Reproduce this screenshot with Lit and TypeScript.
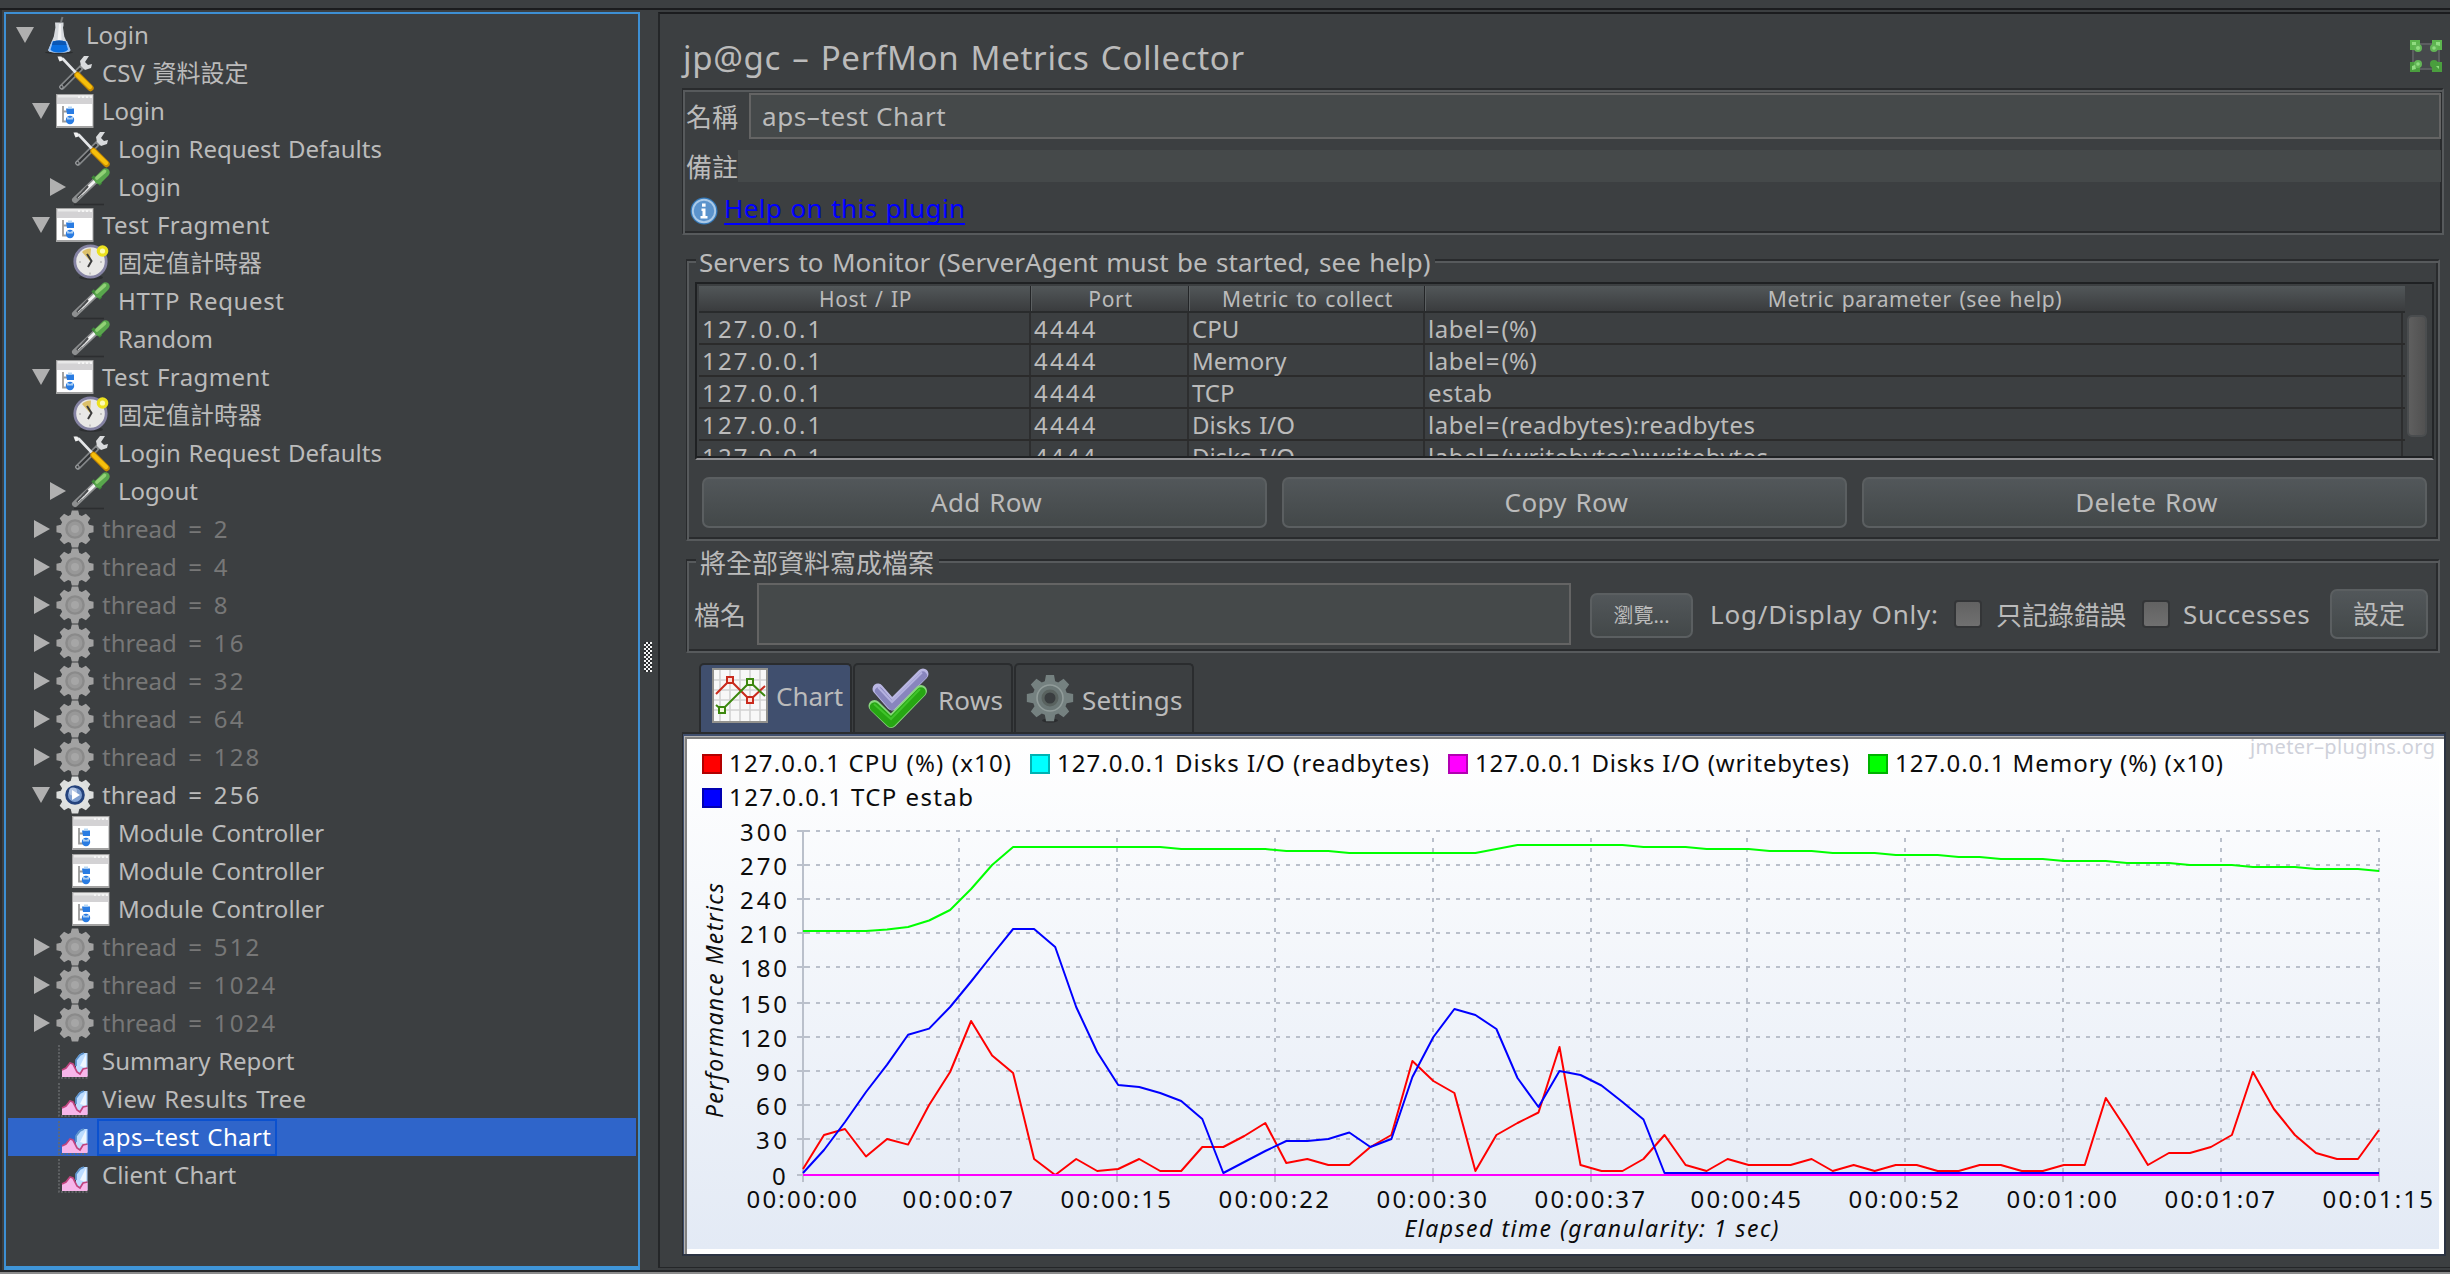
import { LitElement, html, svg, css } from "lit";
import { customElement, property } from "lit/decorators.js";
import { classMap } from "lit/directives/class-map.js";

type IconName =
  | "flask" | "tools" | "module" | "dropper" | "clock"
  | "gearOff" | "gearOn" | "report";

interface TreeNode {
  label: string;
  level: number;
  icon: IconName;
  arrow?: "open" | "closed";
  disabled?: boolean;
  selected?: boolean;
  track?: 1 | 2;
}

/** Outline of a cog wheel with square teeth. */
function cog(cx: number, cy: number, outer: number, inner: number, teeth = 8): string {
  const pts: string[] = [];
  const step = (Math.PI * 2) / teeth;
  for (let i = 0; i < teeth; i++) {
    const a = i * step - Math.PI / 2;
    for (const [da, r] of [[-0.3, inner], [-0.17, outer], [0.17, outer], [0.3, inner]]) {
      pts.push(`${(cx + Math.cos(a + da) * r).toFixed(2)},${(cy + Math.sin(a + da) * r).toFixed(2)}`);
    }
  }
  return `M${pts.join("L")}Z`;
}

/** Digits, dots and equals signs are set wider than letters. */
function spaced(text: string) {
  return text.split(/([\d.]+|=)/).map((part, i) =>
    i % 2 ? html`<span class=${part === "=" ? "eq" : "num"}>${part}</span>` : part);
}

const numStyle = css`
  .num { letter-spacing: 2.2px; }
`;

const ICONS: Record<IconName, unknown> = {
  flask: svg`
    <ellipse cx="19" cy="36.6" rx="14" ry="1.4" fill="#2b2d2f"/>
    <path d="M21 6L22.5 1" stroke="#777a7c" stroke-width="2"/>
    <path d="M15 6.500h8.500v3l-.5 2 1.300 9 6 13.500c0 2-3 2.500-11 2.500s-11-.5-11-2.500l5.500-13.500 1.600-9z" fill="#d6d9dd"/>
    <path d="M19 8h2l.5 17h-4z" fill="#f2f3f4"/>
    <path d="M12 25h15l3.500 9c-1 2-4 2.500-11.300 2.500S9 36 8.200 34z" fill="#9cc3f3"/>
    <path d="M13 25.500q6-2 12.500 0l2.500 8q-2 3-9 3t-8.500-3z" fill="#0a6fe0"/>
    <path d="M13 25.500q6-2 12.500 0l1 3.500H12z" fill="#0a57b4"/>`,
  tools: svg`
    <path d="M26 13L6 33" stroke="#85888a" stroke-width="5.500" stroke-linecap="round"/>
    <path d="M24 15L6.500 32.500" stroke="#303234" stroke-width="2.400" stroke-linecap="round"/>
    <circle cx="5.500" cy="33" r="1.700" fill="#3c3f41" stroke="#a5a7a9"/>
    <path d="M33 2l-5 0-4 5 1 5 4 4 6-2 1-4-4 1-3-3z" fill="#d9dbdd"/>
    <path d="M3 4l4 1 15 16" stroke="#e4e6e8" stroke-width="2.600" fill="none"/>
    <path d="M1.500 2.500l4 0 1 4-3 1z" fill="#f1f1f1"/>
    <path d="M21.500 21L34.500 34" stroke="#c88a00" stroke-width="6.400" stroke-linecap="round"/>
    <path d="M21.500 21L34 33" stroke="#f6bf0c" stroke-width="4.400" stroke-linecap="round"/>`,
  module: svg`
    <rect x="0" y="2" width="37.500" height="34" fill="#a2a2a2"/>
    <rect x="1" y="3" width="35.500" height="31" fill="#fff"/>
    <rect x="1" y="3" width="35.500" height="9" fill="#d3d2d4"/>
    <rect x="2" y="3" width="34" height="2.500" fill="#e8e8e8"/>
    <path d="M22 5h2M26 5h2M30 5h2M34 5h2" stroke="#f5f5f5" stroke-width="2"/>
    <path d="M7 14v15.500h4M7 19.500h4" stroke="#9b9b9b" stroke-width="1.800" fill="none"/>
    <path d="M10 16.500h8v5.500h-7z" fill="#2a7ce2"/><path d="M12 14.500h4v2h-4z" fill="#b8d8f4"/>
    <circle cx="14" cy="28" r="4.200" fill="#2a7ce2"/><path d="M11 24.500l3 1.500 3-1.500v3h-6z" fill="#a9cdf2"/>`,
  dropper: svg`
    <path d="M2 36.500h30" stroke="#2c2e30" stroke-width="1.600"/>
    <path d="M23 13L3 32" stroke="#8d8f90" stroke-width="6" stroke-linecap="round"/>
    <path d="M24 12L9 26" stroke="#f3f3f3" stroke-width="3"/>
    <path d="M16 18L5 30" stroke="#4a4c4e" stroke-width="2.200"/>
    <path d="M12 24L6 30" stroke="#b9bbbc" stroke-width="1"/>
    <path d="M20.500 8.500l8.500 8" stroke="#3d8637" stroke-width="3.400"/>
    <path d="M26.500 11.500L33.500 4.500" stroke="#58a64c" stroke-width="8.400" stroke-linecap="round"/>
    <path d="M25 10L32.500 3.500" stroke="#92d176" stroke-width="3.600" stroke-linecap="round"/>`,
  clock: svg`
    <ellipse cx="19" cy="33.500" rx="12" ry="2.600" fill="#2d2f31"/>
    <circle cx="18.500" cy="17.500" r="15.700" fill="#e9e8e6" stroke="#8583a3" stroke-width="2.800"/>
    <path d="M18 17L10 8q4-4 9-3.500z" fill="#dcc069"/>
    <path d="M15 10l4.500 7-3.500 6" stroke="#3c3c3c" stroke-width="2" fill="none"/>
    <path d="M7 18h2M18 28.500v2M28 18h2" stroke="#b9b8b8" stroke-width="1.500"/>
    <circle cx="30.500" cy="7" r="5.800" fill="#ece11f"/><circle cx="30.500" cy="7" r="2.600" fill="#fdfbb4"/>`,
  gearOff: svg`
    <path d="${cog(19, 19, 18.8, 14.6)}" fill="#a2a2a2"/>
    <circle cx="19" cy="19" r="14.200" fill="#a2a2a2"/>
    <circle cx="19" cy="19" r="8.600" fill="#989898" stroke="#8a8a8a" stroke-width="2.400"/>
    <circle cx="19" cy="19" r="4" fill="#a6a6a6"/>`,
  gearOn: svg`
    <path d="${cog(19, 19, 18.8, 14.6)}" fill="#dcdedd"/>
    <circle cx="19" cy="19" r="14.200" fill="#e0e2e1"/>
    <circle cx="19" cy="19" r="8.400" fill="#7f9fd0" stroke="#24427c" stroke-width="2.800"/>
    <circle cx="17" cy="15.500" r="4" fill="#b4c6e4"/>
    <path d="M16 14l8 5-8 5z" fill="#fff"/>`,
  report: svg`
    <path d="M3 3v33h30" stroke="#66696b" stroke-width="1.600" stroke-dasharray="2 1.500" fill="none"/>
    <path d="M20 30v-13l3-4 3-2h5.500v23l-5 0z" fill="#bcdcff"/>
    <path d="M20 24v-6l4-5 4-2" stroke="#5c92cc" stroke-width="1.800" fill="none"/>
    <path d="M24 24L30 12v14z" fill="#eef6ff"/>
    <path d="M6 35v-7l4-2 4-5 3 1 5 9 2 1 3-5 4.500 0v8z" fill="#f7b6ea"/>
    <path d="M6 28l4-2 4-5 3 1 4 8 3 2 3-5 4.500-1" stroke="#c0447e" stroke-width="1.700" fill="none"/>`,
};

const TREE: TreeNode[] = [
  { label: "Login", level: 0, icon: "flask", arrow: "open" },
  { label: "CSV 資料設定", level: 1, icon: "tools" },
  { label: "Login", level: 1, icon: "module", arrow: "open" },
  { label: "Login Request Defaults", level: 2, icon: "tools" },
  { label: "Login", level: 2, icon: "dropper", arrow: "closed" },
  { label: "Test Fragment", level: 1, icon: "module", arrow: "open", track: 1 },
  { label: "固定值計時器", level: 2, icon: "clock" },
  { label: "HTTP Request", level: 2, icon: "dropper", track: 2 },
  { label: "Random", level: 2, icon: "dropper" },
  { label: "Test Fragment", level: 1, icon: "module", arrow: "open", track: 1 },
  { label: "固定值計時器", level: 2, icon: "clock" },
  { label: "Login Request Defaults", level: 2, icon: "tools" },
  { label: "Logout", level: 2, icon: "dropper", arrow: "closed" },
  ...[2, 4, 8, 16, 32, 64, 128].map((n): TreeNode => ({
    label: `thread = ${n}`, level: 1, icon: "gearOff", arrow: "closed", disabled: true,
  })),
  { label: "thread = 256", level: 1, icon: "gearOn", arrow: "open" },
  { label: "Module Controller", level: 2, icon: "module" },
  { label: "Module Controller", level: 2, icon: "module" },
  { label: "Module Controller", level: 2, icon: "module" },
  ...[512, 1024, 1024].map((n): TreeNode => ({
    label: `thread = ${n}`, level: 1, icon: "gearOff", arrow: "closed", disabled: true,
  })),
  { label: "Summary Report", level: 1, icon: "report" },
  { label: "View Results Tree", level: 1, icon: "report", track: 1 },
  { label: "aps–test Chart", level: 1, icon: "report", selected: true, track: 1 },
  { label: "Client Chart", level: 1, icon: "report" },
];

@customElement("plan-tree")
export class PlanTree extends LitElement {
  @property({ attribute: false }) nodes: TreeNode[] = [];

  static styles = [numStyle, css`
    :host { display: block; padding: 2px; }
    .row { display: flex; align-items: center; height: 38px; padding-left: 8px; color: #bbbbbb; }
    .row.level1 { padding-left: 24px; }
    .row.level2 { padding-left: 40px; }
    .row.disabled { color: #777777; }
    .row.selected { background: #2f65ca; color: #fff; }
    .arrow { width: 18px; height: 18px; margin-right: 6px; flex: none; }
    .icon { width: 38px; height: 38px; flex: none; overflow: visible; }
    .label { margin-left: 3px; padding: 0 4px 0 3px; border: 2px solid transparent; height: 33px; line-height: 31px; white-space: pre; font-size: 24px; word-spacing: 1.4px; }
    .selected .label { border-color: #0b51cf; }
    .eq { margin: 0 4px; }
    .track1 { letter-spacing: 0.4px; }
    .track2 { letter-spacing: 0.65px; }
  `];

  render() {
    return this.nodes.map((n) => html`
      <div class=${classMap({ row: true, [`level${n.level}`]: true, disabled: !!n.disabled, selected: !!n.selected })}>
        <svg class="arrow" viewBox="0 0 18 18">
          ${n.arrow === "open" ? svg`<path d="M0 1h18L9 17z" fill="#b0b0b0"/>` : ""}
          ${n.arrow === "closed" ? svg`<path d="M2 0v18L18 9z" fill="#b0b0b0"/>` : ""}
        </svg>
        <svg class="icon" viewBox="0 0 38 38">${ICONS[n.icon]}</svg>
        <span class=${classMap({ label: true, track1: n.track === 1, track2: n.track === 2 })}>${spaced(n.label)}</span>
      </div>`);
  }
}

interface Series { color: string; ys: number[]; }

const X0 = 803, X1 = 2379, BASE = 1175;

// Vertical plot positions, one sample per second.
const MEMORY = [931, 931, 931, 931, 929.5, 927, 920.5, 910, 889, 865, 847, 847, 847, 847, 847, 847, 847, 847,
  849, 849, 849, 849, 849, 851, 851, 851, 853, 853, 853, 853, 853, 853, 853, 849, 845, 845, 845, 845, 845, 845,
  847, 847, 847, 849, 849, 849, 851, 851, 851, 853, 853, 853, 855, 855, 855, 857, 857, 859, 859, 859,
  861, 861, 861, 863, 863, 863, 865, 865, 865, 867, 867, 867, 869, 869, 869, 871];
const TCP = [1173, 1150, 1122, 1092, 1064.6, 1034.7, 1028.6, 1007, 981.5, 955, 929, 929, 947, 1007, 1052, 1085,
  1087, 1093, 1101, 1119, 1173, 1162, 1151, 1141, 1141, 1139, 1132.5, 1147, 1139, 1077, 1037, 1009, 1015, 1029,
  1078, 1107, 1071, 1075, 1085.5, 1102, 1119.5, ...Array(35).fill(1173)];
const CPU = [1169, 1135, 1129, 1156.5, 1139, 1144.6, 1105, 1072, 1021, 1055.5, 1073, 1159, 1175, 1159, 1171, 1169,
  1159, 1171, 1171, 1147, 1147, 1136, 1123, 1163, 1159, 1165, 1165, 1147, 1135, 1061, 1081, 1093, 1171, 1135,
  1123, 1112.5, 1047, 1165, 1171, 1171, 1159, 1135, 1165, 1171, 1159, 1165, 1165, 1165, 1159, 1171, 1165, 1171,
  1165, 1165, 1171, 1171, 1165, 1165, 1171, 1171, 1165, 1165, 1098, 1130, 1165, 1153, 1153, 1147, 1135, 1072,
  1109, 1135, 1153, 1159, 1159, 1130];
const FLAT = Array(76).fill(BASE);

const SERIES: Series[] = [
  { color: "#ff0000", ys: CPU },
  { color: "#00ffff", ys: FLAT },
  { color: "#00ff00", ys: MEMORY },
  { color: "#0000ff", ys: TCP },
  { color: "#ff00ff", ys: FLAT },
];

const LEGEND = [
  { x: 702, y: 754, w: 282, fill: "#ff0000", edge: "#b20000", text: "127.0.0.1 CPU (%) (x10)" },
  { x: 1030, y: 754, w: 372, fill: "#00ffff", edge: "#00b2b2", text: "127.0.0.1 Disks I/O (readbytes)" },
  { x: 1448, y: 754, w: 374, fill: "#ff00ff", edge: "#b200b2", text: "127.0.0.1 Disks I/O (writebytes)" },
  { x: 1868, y: 754, w: 328, fill: "#00ff00", edge: "#00b200", text: "127.0.0.1 Memory (%) (x10)" },
  { x: 702, y: 788, w: 244, fill: "#0000ff", edge: "#0000b2", text: "127.0.0.1 TCP estab" },
];

const GRID_Y: [number, number][] = [[300, 831], [270, 865], [240, 899], [210, 933], [180, 967], [150, 1003],
  [120, 1037], [90, 1071], [60, 1105], [30, 1139], [0, 1175]];
const GRID_X: [string, number][] = [["00:00:00", 803], ["00:00:07", 959], ["00:00:15", 1117], ["00:00:22", 1275],
  ["00:00:30", 1433], ["00:00:37", 1591], ["00:00:45", 1747], ["00:00:52", 1905], ["00:01:00", 2063],
  ["00:01:07", 2221], ["00:01:15", 2379]];

@customElement("metrics-chart")
export class MetricsChart extends LitElement {
  static styles = css`
    :host { display: block; }
    .canvas { display: block; width: 1757px; height: 515px; }
    .text { font-size: 24px; fill: #0c0c0c; }
    .title { font-size: 23px; font-style: italic; fill: #0c0c0c; }
    .mark { font-size: 20px; fill: #cfd1da; }
    .grid { stroke: #bac0cb; stroke-width: 2; fill: none; }
    .dashed { stroke-dasharray: 4 6; }
    .line { fill: none; stroke-width: 2; stroke-linejoin: round; }
  `;

  render() {
    const sx = (X1 - X0) / 75;
    return html`<svg class="canvas" viewBox="687 739 1757 515">
      <defs><linearGradient id="sky" x1="0" y1="0" x2="0" y2="1">
        <stop offset="0" stop-color="#ffffff"/><stop offset="1" stop-color="#e3eaf5"/>
      </linearGradient></defs>
      <rect x="687" y="739" width="1757" height="515" fill="#fff"/>
      <rect x="687" y="739" width="1752" height="510" fill="url(#sky)"/>
      ${LEGEND.map((l) => svg`
        <rect x=${l.x + 1} y=${l.y + 1} width="18" height="18" fill=${l.fill} stroke=${l.edge} stroke-width="2"/>
        <text class="text" x=${l.x + 27} y=${l.y + 17.5} textLength=${l.w}>${l.text}</text>`)}
      <text class="mark" x="2250" y="754" textLength="185">jmeter–plugins.org</text>
      ${GRID_Y.map(([v, y]) => svg`
        <path class="grid" d="M797 ${y}H810"/>
        ${v ? svg`<path class="grid dashed" d="M816 ${y}H${X1 + 1}"/>` : ""}
        <text class="text" x=${v >= 100 ? 740 : v ? 756 : 772} y=${y + 10}
          textLength=${v >= 100 ? 47 : v ? 31 : 15}>${v}</text>`)}
      ${GRID_X.map(([t, x], i) => svg`
        <path class="grid" d="M${x} 1171V1182"/>
        <path class=${i ? "grid dashed" : "grid"} d="M${x} ${i ? 838 : 830}V1175"/>
        <text class="text" x=${x - 56.5} y="1207.5" textLength="110.5">${t}</text>`)}
      ${SERIES.map((s) => svg`
        <polyline class="line" stroke=${s.color} points=${s.ys.map((y, i) => `${(X0 + i * sx).toFixed(1)},${y}`).join(" ")}/>`)}
      <text class="title" transform="translate(723 1118) rotate(-90)" textLength="235">Performance Metrics</text>
      <text class="title" x="1404.500" y="1237" textLength="374">Elapsed time (granularity: 1 sec)</text>
    </svg>`;
  }
}

const COLUMNS = ["Host / IP", "Port", "Metric to collect", "Metric parameter (see help)"];
const ROWS = [
  ["127.0.0.1", "4444", "CPU", "label=(%)"],
  ["127.0.0.1", "4444", "Memory", "label=(%)"],
  ["127.0.0.1", "4444", "TCP", "estab"],
  ["127.0.0.1", "4444", "Disks I/O", "label=(readbytes):readbytes"],
  ["127.0.0.1", "4444", "Disks I/O", "label=(writebytes):writebytes"],
];

@customElement("server-table")
export class ServerTable extends LitElement {
  static styles = [numStyle, css`
    :host { display: flex; box-sizing: border-box; height: 178px; overflow: hidden;
      border: 2px solid #1f2123; border-right-color: #232527; border-bottom: 2px solid #8f8f92;
      box-shadow: inset 0 -2px 0 #1f2123; padding: 2px 0 2px 2px; }
    .grid { width: 1706px; overflow: hidden; }
    .row { display: grid; grid-template-columns: 332px 158px 236px 978px; height: 30px; border-bottom: 2px solid #2b2b2b; }
    .head { height: 25px; background: linear-gradient(#525759, #3a3c3e); border-bottom-color: #292b2c; }
    .cell { box-sizing: border-box; padding-left: 3px; border-right: 2px solid #2d2e2f; height: 30px; line-height: 32px; font-size: 24px; white-space: pre; word-spacing: 1.4px; }
    .cell:last-child { padding-left: 3px; letter-spacing: 0.5px; }
    .eq { margin: 0 1.5px 0 1px; }
    .head .cell { padding: 0 0 0 2px; text-align: center; height: 25px; line-height: 27px; font-size: 21px; letter-spacing: 0.65px; border-right: 1px solid #232527; box-shadow: 1px 0 0 #5c6062; }
    .head .cell:last-child { border: none; box-shadow: none; }
    .thumb { box-sizing: border-box; margin: 29px 0 0 2px; width: 20px; height: 122px; border-radius: 5px; border: 2px solid #4a4d4f;
      background: linear-gradient(90deg, #5f5f5f, #515151); }
  `];

  render() {
    return html`
      <div class="grid">
        <div class="row head">${COLUMNS.map((c) => html`<div class="cell">${c}</div>`)}</div>
        ${ROWS.map((r) => html`<div class="row">${r.map((c) => html`<div class="cell">${spaced(c)}</div>`)}</div>`)}
      </div>
      <div class="thumb"></div>`;
  }
}

@customElement("app-root")
export class AppRoot extends LitElement {
  static styles = css`
    :host { display: block; width: 2450px; height: 1274px; overflow: hidden; background: #3c3f41; color: #bbbbbb;
      font-family: "Noto Sans", "Noto Sans CJK TC", sans-serif; font-size: 26px; }
    .window { display: flex; flex-direction: column; height: 1274px; }
    .toolbar { height: 8px; border-bottom: 2px solid #1b1c1e; flex: none; }
    .body { display: flex; flex: 1; min-height: 0; }
    .left { width: 640px; box-sizing: border-box; padding: 2px 0 0 2px; border-left: 2px solid #2a2c2e; }
    .tree { box-sizing: border-box; height: 1258px; border: 2px solid #3d8fd3; border-bottom: 4px solid #3f95d8; }
    .splitter { width: 18px; display: flex; align-items: flex-start; }
    .grip { width: 8px; height: 30px; margin: 632px 0 0 4px;
      background: conic-gradient(#f2f2f2 25%, #2a2c2e 0 50%, #f2f2f2 0 75%, #2a2c2e 0) 0 0 / 4px 4px; }
    .right { flex: 1; min-width: 0; box-sizing: border-box; display: flex; flex-direction: column; margin-top: 2px;
      border-left: 2px solid #242628; border-top: 2px solid #1b1c1e; height: 1256px; border-bottom: 1px solid #242628; }
    .heading { display: flex; justify-content: space-between; height: 74px; padding: 0 8px 0 23px; line-height: 87px; font-size: 33px; flex: none; letter-spacing: 0.68px; word-spacing: 2px; white-space: pre; }
    .expand { width: 32px; height: 32px; margin-top: 26px; }
    .etched { box-sizing: border-box; flex: none; border: 2px solid #575a5c; border-top-color: #292b2d; border-left: 1px solid #292b2d;
      box-shadow: inset 2px 2px 0 #575a5c, inset -2px -2px 0 #292b2d; }
    .etched.name { margin-left: 22px; width: 1762px; height: 147px; padding: 3px 1px 0 2px; }
    .etched.servers { margin: 24px 0 0 26px; width: 1754px; height: 282px; }
    .etched.file { margin: 18px 0 0 26px; width: 1754px; height: 94px; }
    .line { display: flex; align-items: center; }
    .caption { width: 53px; white-space: nowrap; margin-left: 1px; padding-right: 1px; }
    .line.top { height: 46px; }
    .line.comment { height: 32px; margin-top: 11px; }
    .line.help { height: 38px; margin-top: 10px; }
    .field { box-sizing: border-box; border: 2px solid #646464; background: #45494a; white-space: pre; }
    .field.text { flex: 1; height: 46px; line-height: 42px; padding-left: 11px; margin-left: 9px; letter-spacing: 0.6px; }
    .area { flex: 1; height: 32px; background: #45494a; margin-left: -2px; }
    .info { width: 28px; height: 28px; margin: 0 6px 0 5px; }
    .link { color: #0000ff; line-height: 31px; height: 30px; border-bottom: 2px solid #0000ff; margin-top: -4px; word-spacing: 1px; letter-spacing: 0.4px; white-space: pre; }
    .title { display: block; width: fit-content; background: #3c3f41; height: 30px; line-height: 30px; padding: 0 4px 0 3px; margin: -14px 0 0 9px; white-space: pre; word-spacing: 1.5px; letter-spacing: 0.05px; }
    .file .title { margin-top: -13px; padding: 0 5px 0 4px; letter-spacing: 0; }
    .table { margin: 5px 4px 0 8px; width: 1739px; }
    .buttons { display: grid; grid-template-columns: repeat(3, 565px); gap: 15px; margin: 17px 0 0 15px; }
    .button { box-sizing: border-box; height: 51px; line-height: 47px; text-align: center; border-radius: 7px; border: 2px solid #5b5f61;
      background: linear-gradient(#52575a, #434849); word-spacing: 1.5px; letter-spacing: 0.35px; }
    .buttons .button { padding-left: 4px; }
    .options { display: flex; align-items: center; height: 62px; margin: 5px 0 0 7px; white-space: nowrap; word-spacing: 1.5px; }
    .options .path { width: 814px; height: 62px; margin-left: 11px; }
    .button.browse { width: 103px; height: 45px; font-size: 20px; line-height: 41px; margin: 3px 17px 0 19px; letter-spacing: 0; }
    .button.config { width: 98px; height: 50px; margin-left: auto; margin-right: 10px; letter-spacing: 0; }
    .check { box-sizing: border-box; width: 28px; height: 28px; border-radius: 4px; border: 2px solid #333537; background: linear-gradient(#626262, #707070); }
    .log { width: 244px; letter-spacing: 0.8px; word-spacing: 1.5px; }
    .errors { margin: 0 16px 0 14px; }
    .ok { margin-left: 13px; letter-spacing: 0.6px; }
    .tabs { display: flex; align-items: flex-end; height: 69px; margin: 10px 0 0 39px; flex: none; }
    .tab { box-sizing: border-box; display: flex; align-items: center; height: 69px; border: 2px solid #2a2c2e; border-bottom: none; border-radius: 5px 5px 0 0; white-space: nowrap; }
    .tab.chart { width: 153px; background: #404f6e; padding-left: 11px; }
    .tab.rows { width: 160px; margin-left: 1px; padding-left: 13px; }
    .tab.settings { width: 180px; margin-left: 1px; padding-left: 10px; }
    .chart .tabicon { width: 56px; height: 55px; margin: -6px 8px 0 0; }
    .chart .name { margin-top: -5px; }
    .rows .tabicon { width: 62px; height: 62px; margin-right: 8px; }
    .settings .tabicon { width: 48px; height: 48px; margin-right: 8px; }
    .rows .name, .settings .name { margin-top: 2px; letter-spacing: 0.2px; }
    .pane { box-sizing: border-box; flex: none; margin-left: 22px; width: 1764px; height: 524px; border-top: 2px solid #2a2c2e; border-left: 1px solid #2a2c2e;
      border-right: 2px solid #2b3342; border-bottom: 2px solid #2b3342; background: #404f6e; padding: 2px 0 0 1px; }
    .chartframe { border-top: 1px solid #b5b5b5; border-left: 1px solid #b5b5b5; }
    .chartinner { border-top: 2px solid #808080; border-left: 2px solid #808080; background: #fff; }
    .status { height: 2px; flex: none; background: #242628; border-bottom: 2px solid #8c8c8c; }
  `;

  render() {
    return html`
      <div class="window">
        <div class="toolbar"></div>
        <div class="body">
          <div class="left"><div class="tree"><plan-tree .nodes=${TREE}></plan-tree></div></div>
          <div class="splitter"><div class="grip"></div></div>
          <div class="right">
            <div class="heading">
              <span>jp@gc – PerfMon Metrics Collector</span>
              <svg class="expand" viewBox="0 0 32 32">
                <rect x="3" y="4" width="26" height="25" rx="6" fill="#46494c" stroke="#5b5d60" stroke-width="2"/>
                <g fill="#5cb54e"><path d="M0 0h10v5H5v5H0zM32 0H22v5h5v5h5z"/><path d="M0 32h10v-5H5v-5H0zM32 32H22v-5h5v-5h5z" fill="#4a9e3e"/></g>
                <g fill="#62b556"><circle cx="8" cy="8" r="4"/><circle cx="24" cy="8" r="4"/><circle cx="8" cy="24" r="4"/><circle cx="24" cy="24" r="4" fill="#4a9e3e"/></g>
                <g fill="#8fdc80"><path d="M2 2h4v3H2zM26 2h4v4l-4-1z"/><circle cx="8" cy="8" r="2"/><circle cx="24" cy="8" r="1.800"/><circle cx="8" cy="24" r="1.800"/><path d="M2 26l3-1 1 4-4 1zM26 26h3v3z"/></g>
              </svg>
            </div>
            <div class="etched name">
              <div class="line top"><span class="caption">名稱</span><div class="field text">aps–test Chart</div></div>
              <div class="line comment"><span class="caption">備註</span><div class="area"></div></div>
              <div class="line help">
                <svg class="info" viewBox="0 0 28 28">
                  <circle cx="14" cy="14" r="13.500" fill="#3478b8"/><circle cx="14" cy="14" r="11.200" fill="#5b93cc" stroke="#a9c9e8" stroke-width="2"/>
                  <path d="M11.500 11.500h4V19h2v2.500h-7V19h2v-5h-1z" fill="#fff"/><rect x="12" y="6.500" width="3.600" height="3.200" fill="#fff"/>
                </svg>
                <span class="link">Help on this plugin</span>
              </div>
            </div>
            <div class="etched servers">
              <span class="title">Servers to Monitor (ServerAgent must be started, see help)</span>
              <server-table class="table"></server-table>
              <div class="buttons">
                <div class="button">Add Row</div><div class="button">Copy Row</div><div class="button">Delete Row</div>
              </div>
            </div>
            <div class="etched file">
              <span class="title">將全部資料寫成檔案</span>
              <div class="options">
                <span>檔名</span><div class="field path"></div>
                <div class="button browse">瀏覽...</div>
                <span class="log">Log/Display Only:</span>
                <div class="check"></div><span class="errors">只記錄錯誤</span>
                <div class="check"></div><span class="ok">Successes</span>
                <div class="button config">設定</div>
              </div>
            </div>
            <div class="tabs">
              <div class="tab chart">
                <svg class="tabicon" viewBox="0 0 56 55">
                  <rect x="1" y="1" width="54" height="53" fill="#f8f8f8" stroke="#93928e" stroke-width="2"/>
                  <path d="M8 2v51M18 2v51M28 2v51M38 2v51M48 2v51M2 12h52M2 22h52M2 32h52M2 42h52" stroke="#d2d2d2" stroke-width="1.600"/>
                  <path d="M4 26L18 12L38 32L53 18" stroke="#c92a1c" stroke-width="2" fill="none"/>
                  <path d="M4 37L10 42L38 14L53 28" stroke="#3c870e" stroke-width="2" fill="none"/>
                  <path d="M15 9h6v6h-6zM35 29h6v6h-6z" fill="#ffdcd6" stroke="#c92a1c" stroke-width="2"/>
                  <path d="M7 39h6v6h-6zM35 11h6v6h-6z" fill="#f2fadd" stroke="#3c870e" stroke-width="2"/>
                </svg>
                <span class="name">Chart</span>
              </div>
              <div class="tab rows">
                <svg class="tabicon" viewBox="0 0 62 62">
                  <path d="M10 21L24 37L55 6" stroke="#b9b6e2" stroke-width="11" fill="none" stroke-linecap="round" stroke-linejoin="round"/>
                  <path d="M11 23L24 38L55 7.500" stroke="#8885bd" stroke-width="8" fill="none" stroke-linecap="round" stroke-linejoin="round"/>
                  <path d="M10 19L24 34L54 4.500" stroke="#b4b1e0" stroke-width="2" fill="none"/>
                  <path d="M6.500 38L23 54L53 23" stroke="#8ad67f" stroke-width="12" fill="none" stroke-linecap="round" stroke-linejoin="round"/>
                  <path d="M6.500 39L23 54.500L53 24" stroke="#27a613" stroke-width="9.500" fill="none" stroke-linecap="round" stroke-linejoin="round"/>
                  <path d="M6 36L23 51L52 21" stroke="#3fc42a" stroke-width="2" fill="none"/>
                </svg>
                <span class="name">Rows</span>
              </div>
              <div class="tab settings">
                <svg class="tabicon" viewBox="0 0 48 48">
                  <ellipse cx="24" cy="45.500" rx="8" ry="2" fill="#2b2d2f"/>
                  <path d=${cog(24, 23, 23.5, 17.5)} fill="#758180"/>
                  <circle cx="24" cy="23" r="17" fill="#758180"/>
                  <circle cx="24" cy="23" r="13" fill="#6b7776" stroke="#919c9a" stroke-width="1.600"/>
                  <circle cx="24" cy="23" r="7" fill="#3a3e40" stroke="#59625f" stroke-width="3"/>
                </svg>
                <span class="name">Settings</span>
              </div>
            </div>
            <div class="pane"><div class="chartframe"><div class="chartinner"><metrics-chart></metrics-chart></div></div></div>
          </div>
        </div>
        <div class="status"></div>
      </div>`;
  }
}
